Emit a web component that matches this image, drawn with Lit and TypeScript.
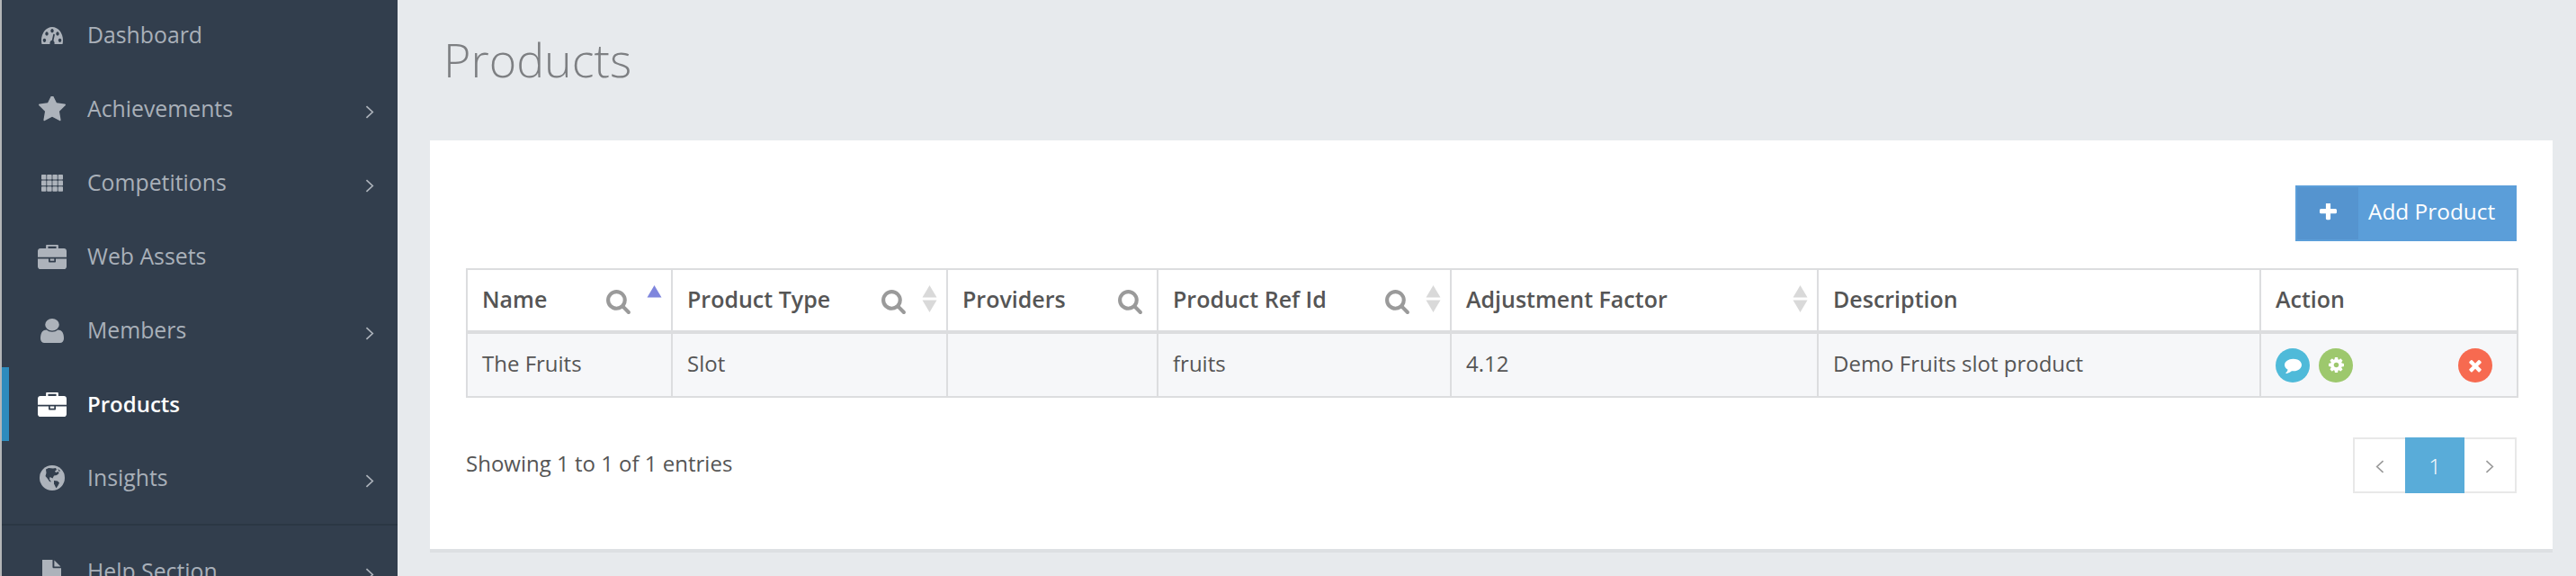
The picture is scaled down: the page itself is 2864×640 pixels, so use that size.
import { LitElement, html, css, svg } from "lit";
import { customElement } from "lit/decorators.js";

const P = {
  dash: ["0 256 1792 1152","M384 1152q0-53-37.500-90.500t-90.500-37.500-90.500 37.500-37.500 90.500 37.500 90.500 90.500 37.500 90.500-37.500 37.500-90.500zm192-448q0-53-37.500-90.500t-90.500-37.500-90.500 37.500-37.500 90.500 37.500 90.500 90.500 37.500 90.500-37.500 37.500-90.500zm428 481l101-382q6-26-7.500-48.500t-38.500-29.500-48 6.500-30 39.500l-101 382q-60 5-107 43.500t-63 98.500q-20 77 20 146t117 89 146-20 89-117q16-60-6-117t-72-91zm660-33q0-53-37.500-90.500t-90.500-37.500-90.500 37.500-37.500 90.500 37.500 90.500 90.500 37.500 90.500-37.500 37.500-90.500zm-640-640q0-53-37.500-90.500t-90.500-37.500-90.500 37.500-37.500 90.500 37.500 90.500 90.500 37.500 90.500-37.500 37.500-90.500zm448 192q0-53-37.500-90.500t-90.500-37.500-90.500 37.500-37.500 90.500 37.500 90.500 90.500 37.500 90.500-37.500 37.500-90.500zm320 448q0 261-141 483-19 29-54 29h-1402q-35 0-54-29-141-221-141-483 0-182 71-348t191-286 286-191 348-71 348 71 286 191 191 286 71 348z"],
  star: ["64 128 1664 1536","M1728 647q0 22-26 48l-363 354 86 500q1 7 1 20 0 21-10.500 35.500t-30.500 14.500q-19 0-40-12l-449-236-449 236q-22 12-40 12-21 0-31.500-14.500t-10.500-35.500q0-6 2-20l86-500-364-354q-25-27-25-48 0-37 56-46l502-73 225-455q19-41 49-41t49 41l225 455 502 73q56 9 56 46z"],
  brief: ["0 32 1792 1504","M640 256h512v-128h-512v128zm1152 640v480q0 66-47 113t-113 47h-1472q-66 0-113-47t-47-113v-480h672v160q0 26 19 45t45 19h320q26 0 45-19t19-45v-160h672zm-768 0v128h-256v-128h256zm768-480v384h-1792v-384q0-66 47-113t113-47h352v-160q0-40 28-68t68-28h576q40 0 68 28t28 68v160h352q66 0 113 47t47 113z"],
  user: ["256 128 1280 1536","M1536 1399q0 109-62.500 187t-150.500 78h-854q-88 0-150.500-78t-62.500-187q0-85 8.500-160.500t31.500-152 58.500-131 94-89 134.500-34.500q131 128 313 128t313-128q76 0 134.500 34.500t94 89 58.500 131 31.500 152 8.500 160.500zm-256-887q0 159-112.500 271.500t-271.500 112.500-271.500-112.500-112.500-271.500 112.500-271.500 271.500-112.500 271.500 112.500 112.500 271.500z"],
  file: ["128 0 1408 1792","M1024 512v-472q22 14 36 28l408 408q14 14 28 36h-472zm-128 32q0 40 28 68t68 28h544v1056q0 40-28 68t-68 28h-1344q-40 0-68-28t-28-68v-1600q0-40 28-68t68-28h800v544z"],
};
const SEARCH = "M1216 832q0-185-131.500-316.500t-316.500-131.500-316.500 131.500-131.500 316.500 131.500 316.500 316.500 131.500 316.500-131.500 131.500-316.500zm512 832q0 52-38 90t-90 38q-54 0-90-38l-343-342q-179 124-399 124-143 0-273.500-55.500t-225-150-150-225-55.500-273.500 55.500-273.500 150-225 225-150 273.500-55.500 273.500 55.500 225 150 150 225 55.500 273.500q0 220-124 399l343 343q37 37 37 90z";
const PLUS = "M1600 736v192q0 40-28 68t-68 28h-416v416q0 40-28 68t-68 28h-192q-40 0-68-28t-28-68v-416h-416q-40 0-68-28t-28-68v-192q0-40 28-68t68-28h416v-416q0-40 28-68t68-28h192q40 0 68 28t28 68v416h416q40 0 68 28t28 68z";
const TIMES = "M1490 1322q0 40-28 68l-136 136q-28 28-68 28t-68-28l-294-294-294 294q-28 28-68 28t-68-28l-136-136q-28-28-28-68t28-68l294-294-294-294q-28-28-28-68t28-68l136-136q28-28 68-28t68 28l294 294 294-294q28-28 68-28t68 28l136 136q28 28 28 68t-28 68l-294 294 294 294q28 28 28 68z";
const GEAR = "M1152 896q0-106-75-181t-181-75-181 75-75 181 75 181 181 75 181-75 75-181zm512-109v222q0 12-8 23t-20 13l-185 28q-19 54-39 91 35 50 107 138 10 12 10 25t-9 23q-27 37-99 108t-94 71q-12 0-26-9l-138-108q-44 23-91 38-16 136-29 186-7 28-36 28h-222q-14 0-24.500-8.500t-11.500-21.500l-28-184q-49-16-90-37l-141 107q-10 9-25 9-14 0-25-11-126-114-165-168-7-10-7-23 0-12 8-23 15-21 51-66.500t54-70.500q-27-50-41-99l-183-27q-13-2-21-12.500t-8-23.500v-222q0-12 8-23t19-13l186-28q14-46 39-92-40-57-107-138-10-12-10-24 0-10 9-23 26-36 98.500-107.500t94.500-71.500q13 0 26 10l138 107q44-23 91-38 16-136 29-186 7-28 36-28h222q14 0 24.500 8.500t11.500 21.500l28 184q49 16 90 37l142-107q9-9 24-9 13 0 25 10 129 119 165 170 7 8 7 22 0 12-8 23-15 21-51 66.500t-54 70.500q26 50 41 98l183 28q13 2 21 12.500t8 23.500z";
const COMMENT = "M1792 896q0 174-120 321.500t-326 233-450 85.500q-70 0-145-8-198 175-460 242-49 14-114 22-17 2-30.500-9t-17.500-29v-1q-3-4-.5-12t2-10 4.500-9.500l6-9 7-8.500 8-9q7-8 31-34.500t34.500-38 31-39.500 32.500-51 27-59 26-76q-157-89-247.500-220t-90.500-281q0-130 71-248.500t191-204.500 286-136.500 348-50.500q244 0 450 85.500t326 233 120 321.500z";

const icon = (name: string) => {
  if (name === "th") {
    const cells = [];
    for (let r = 0; r < 3; r++) for (let c = 0; c < 4; c++) cells.push(svg`<rect x=${c * 6.2} y=${r * 6.6} width="5.4" height="5.6" rx="0.8"/>`);
    return html`<svg class="ic th" viewBox="0 0 24 19">${cells}</svg>`;
  }
  if (name === "globe") {
    return html`<svg class="ic globe" viewBox="0 0 28 28"><circle cx="14" cy="14" r="14"/>
      <path class="cut" d="M7 4.500l3-1.500 5 .5 3-.5 1 2-2 1.500 1 1.500 3-1 .5 2-2.500 2-3 .5-1.500 3-3-1.500-.5 2.500 2 3-2-.5-2-3-2.500-3 1-3.500z"/>
      <path class="cut" d="M16 17l4 .5 2 2-1.500 3-2 3-1-2-1.500-3z"/><path class="cut" d="M20 4l3 2-1 1z"/></svg>`;
  }
  const [vb, d] = (P as any)[name];
  return html`<svg class="ic ${name}" viewBox=${vb} preserveAspectRatio="none"><path d=${d}/></svg>`;
};
const chevron = html`<svg class="chev" viewBox="0 0 10 16"><path d="M1.200 1.200L8.500 8L1.200 14.800"/></svg>`;

const NAV = [
  ["Dashboard", "dash", false], ["Achievements", "star", true], ["Competitions", "th", true], ["Web Assets", "brief", false],
  ["Members", "user", true], ["Products", "brief", false, true], ["Insights", "globe", true],
] as any[];

const COLS = [
  { t: "Name", w: 228, s: true, sort: "asc", v: "The Fruits" },
  { t: "Product Type", w: 306, s: true, sort: "both", v: "Slot" },
  { t: "Providers", w: 234, s: true, sort: "", v: "" },
  { t: "Product Ref Id", w: 326, s: true, sort: "both", v: "fruits" },
  { t: "Adjustment Factor", w: 408, s: false, sort: "both", v: "4.12" },
  { t: "Description", w: 492, s: false, sort: "", v: "Demo Fruits slot product" },
  { t: "Action", w: 286, s: false, sort: "", v: "" },
];

@customElement("app-root")
export class AppRoot extends LitElement {
  static styles = css`
    :host { display: block; width: 2864px; height: 640px; overflow: hidden; font-family: "Open Sans", sans-serif; background: #e7eaed; }
    .page { display: flex; height: 640px; overflow: hidden; }
    .side { flex: none; width: 440px; height: 640px; background: #323e4d; border-left: 2px solid #b4b6b8; overflow: hidden; }
    .nav { margin: -2px 0 0; padding: 0; list-style: none; }
    .row { display: flex; align-items: center; height: 82px; box-sizing: border-box; padding-left: 38px; padding-right: 26px; font-size: 24.800px; color: #a9b0b9; }
    .row.active { color: #fff; box-shadow: inset 8px 0 0 #2d8bbd; font-weight: 600; font-size: 24px; }
    .slot { width: 35px; margin-right: 22px; display: flex; justify-content: center; flex: none; }
    .label { flex: 1; position: relative; top: -1px; }
    .ic { fill: #adb3bb; display: block; }
    .active .ic { fill: #fff; }
    .dash { width: 24px; height: 19px; }
    .star { width: 30px; height: 28px; }
    .th { width: 24px; height: 19px; }
    .brief { width: 32px; height: 27px; }
    .user { width: 26px; height: 27px; }
    .globe { width: 28px; height: 28px; }
    .file { width: 21px; height: 26px; }
    .cut { fill: #323e4d; }
    .chev { width: 10px; height: 15px; fill: none; stroke: #adb3bb; stroke-width: 1.800; position: relative; top: 3px; }
    .sep { height: 2px; margin-top: 10px; background: #2b3744; }
    .help { margin-top: 10px; }
    .main { flex: 1; min-width: 0; padding: 0 26px 0 36px; }
    h1 { margin: 0; padding: 35px 0 0 15px; height: 156px; box-sizing: border-box; font-size: 52px; line-height: 62px; font-weight: 300; color: #7d7f82; }
    .card { background: #fff; height: 454px; box-sizing: border-box; padding: 50px 40px 0 40px; box-shadow: 0 4px 0 #dde0e3; }
    .tools { display: flex; justify-content: flex-end; height: 92px; }
    .add { display: flex; align-items: stretch; height: 62px; width: 246px; box-sizing: border-box; border: 2px solid #5b9ed9; background: #5b9ed9; color: #fff; font-size: 24.400px; font-weight: 400; }
    .add .pi { width: 68px; background: #5594cf; display: flex; align-items: center; justify-content: center; margin-right: 11px; flex: none; }
    .add svg { width: 19px; height: 19px; fill: #fff; position: relative; top: -2px; }
    .add .tx { line-height: 54px; white-space: nowrap; }
    table { border-collapse: collapse; table-layout: fixed; width: 2280px; }
    th, td { border: 2px solid #dcdddf; padding: 0; text-align: left; }
    th { height: 67px; font-weight: 600; color: #555; border-bottom-width: 4px; font-size: 25px; }
    td { height: 69px; background: #f6f7f9; color: #555; font-size: 24px; font-weight: 400; }
    .h { display: flex; align-items: center; padding: 0 10px 3px 16px; height: 67px; box-sizing: border-box; }
    .h.ns { padding-right: 15px; }
    .h .t { flex: 1; white-space: nowrap; }
    .c { padding: 0 0 5px 16px; white-space: nowrap; }
    .s { width: 29px; height: 29px; fill: #9a9a9a; flex: none; position: relative; top: 2px; }
    .sort { width: 17px; height: 30px; flex: none; margin-left: 17px; }
    .acts { display: flex; gap: 10px; align-items: center; padding: 0 27px 0 16px; }
    .round { width: 38px; height: 38px; border-radius: 50%; display: flex; align-items: center; justify-content: center; flex: none; }
    .round svg { fill: #fff; display: block; }
    .blue { background: #4fbad9; }
    .green { background: #9dc86d; }
    .red { background: #f76a50; margin-left: auto; }
    .blue svg { width: 19px; height: 19px; }
    .green svg { width: 17px; height: 17px; }
    .red svg { width: 16px; height: 16px; }
    .foot { display: flex; justify-content: space-between; align-items: center; margin-top: 44px; }
    .info { font-size: 24px; color: #555; padding-bottom: 5px; }
    .pager { display: flex; height: 62px; }
    .pg { box-sizing: border-box; display: flex; align-items: center; justify-content: center; border: 2px solid #e8e8e8; width: 58px; }
    .pg svg { width: 10px; height: 15px; fill: none; stroke: #9b9b9b; stroke-width: 1.800; position: relative; top: 1px; }
    .pg.l { border-right: 0; }
    .pg.r { border-left: 0; }
    .pg.cur { width: 66px; border: 0; background: #59acd9; color: #fff; font-size: 24px; font-weight: 300; }
  `;

  private sortIcon(kind: string) {
    const up = kind === "asc" ? "#7f86dd" : "#d9d9d9";
    return html`<svg class="sort" viewBox="0 0 17 30">
      <path d="M8.500 0l8 13.500H.5z" fill=${up}/>
      ${kind === "both" ? svg`<path d="M8.500 30l8-13.500H.5z" fill="#d9d9d9"/>` : ""}
    </svg>`;
  }

  render() {
    return html`<div class="page">
      <aside class="side">
        <ul class="nav">
          ${NAV.map(([t, i, c, a]) => html`<li class="row ${a ? "active" : ""}"><span class="slot">${icon(i)}</span><span class="label">${t}</span>${c ? chevron : ""}</li>`)}
        </ul>
        <div class="sep"></div>
        <div class="row help"><span class="slot">${icon("file")}</span><span class="label">Help Section</span>${chevron}</div>
      </aside>
      <main class="main">
        <h1>Products</h1>
        <section class="card">
          <div class="tools">
            <div class="add"><span class="pi"><svg viewBox="192 192 1408 1408"><path d=${PLUS}/></svg></span><span class="tx">Add Product</span></div>
          </div>
          <table>
            <colgroup>${COLS.map((c) => html`<col style="width:${c.w}px">`)}</colgroup>
            <thead><tr>${COLS.map((c) => html`<th><div class="h ${c.sort ? "" : "ns"}"><span class="t">${c.t}</span>
              ${c.s ? html`<svg class="s" viewBox="0 0 1792 1792"><path d=${SEARCH}/></svg>` : ""}${c.sort ? this.sortIcon(c.sort) : ""}</div></th>`)}</tr></thead>
            <tbody><tr>${COLS.map((c) => c.t === "Action"
              ? html`<td><div class="acts">
                  <span class="round blue"><svg viewBox="0 0 1792 1792"><path d=${COMMENT}/></svg></span>
                  <span class="round green"><svg viewBox="128 128 1536 1536"><path d=${GEAR}/></svg></span>
                  <span class="round red"><svg viewBox="192 192 1408 1408"><path d=${TIMES}/></svg></span></div></td>`
              : html`<td><div class="c">${c.v}</div></td>`)}</tr></tbody>
          </table>
          <div class="foot">
            <div class="info">Showing 1 to 1 of 1 entries</div>
            <div class="pager">
              <span class="pg l"><svg viewBox="0 0 10 16"><path d="M8.800 1.200L1.500 8L8.800 14.800"/></svg></span>
              <span class="pg cur">1</span>
              <span class="pg r"><svg viewBox="0 0 10 16"><path d="M1.200 1.200L8.500 8L1.200 14.800"/></svg></span>
            </div>
          </div>
        </section>
      </main>
    </div>`;
  }
}
